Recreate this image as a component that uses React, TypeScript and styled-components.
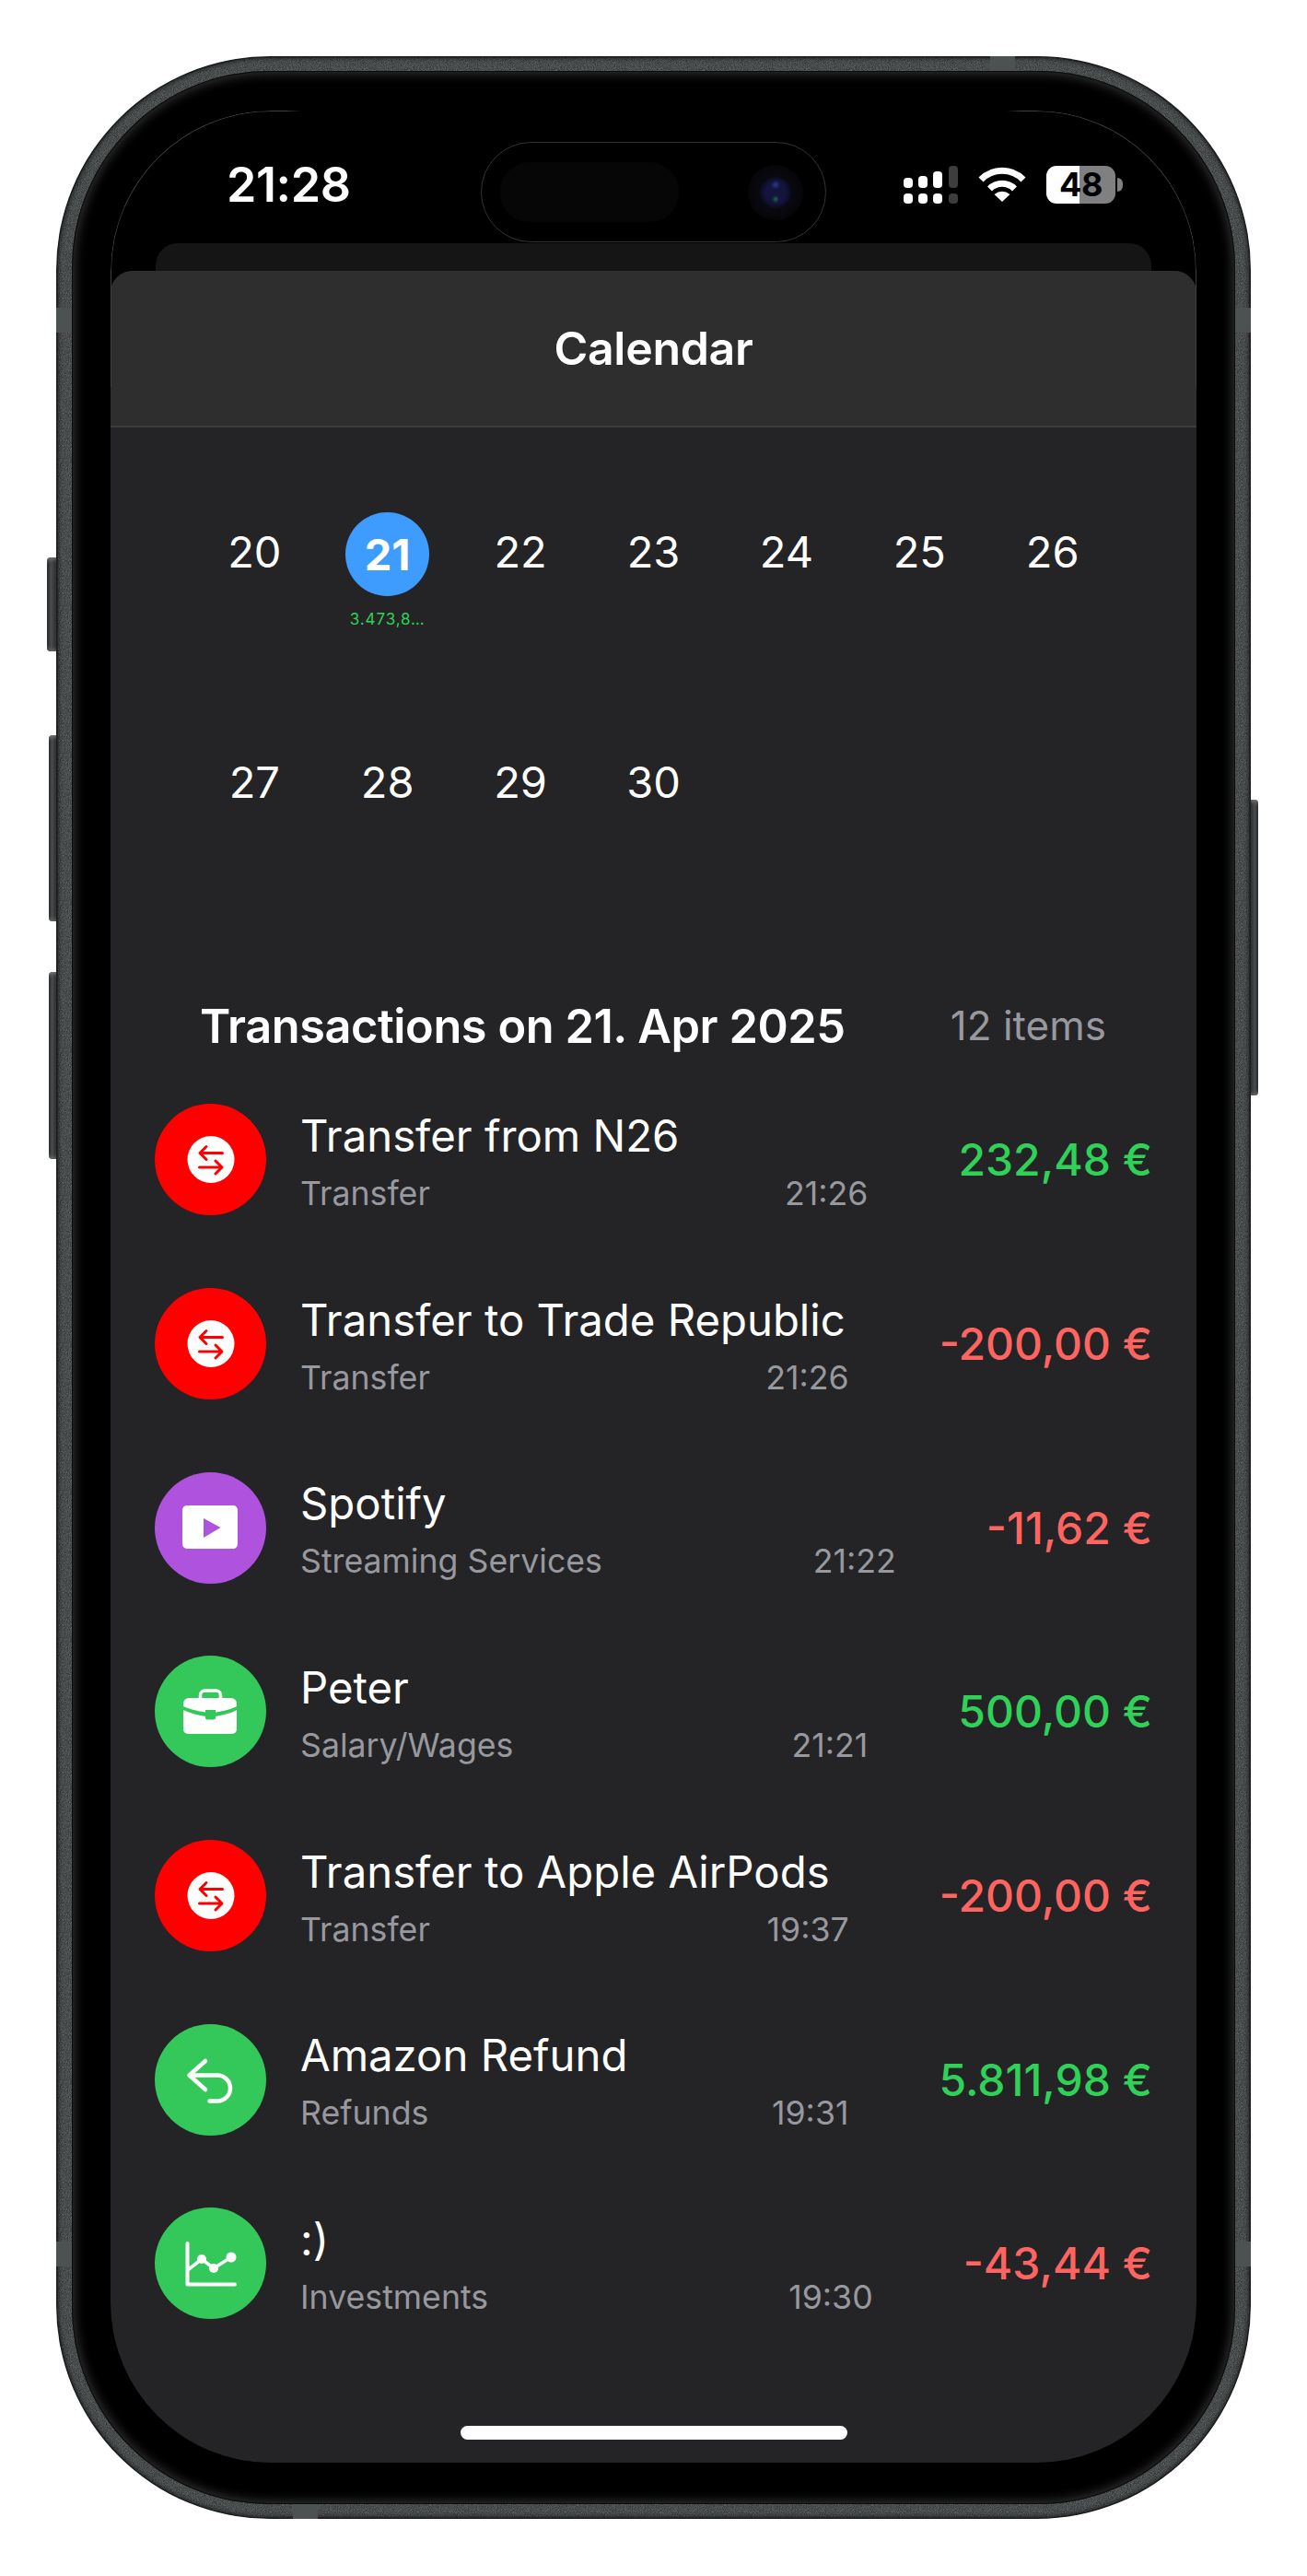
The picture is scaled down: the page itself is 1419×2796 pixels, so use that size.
import React from "react";
import styled, { createGlobalStyle } from "styled-components";

const NOISE = `url("data:image/svg+xml,%3Csvg xmlns='http://www.w3.org/2000/svg' width='160' height='160'%3E%3Cfilter id='n'%3E%3CfeTurbulence type='fractalNoise' baseFrequency='1.1' numOctaves='2' stitchTiles='stitch'/%3E%3CfeColorMatrix values='0 0 0 0 0.6 0 0 0 0 0.62 0 0 0 0 0.62 0 0 0 0.55 -0.12'/%3E%3C/filter%3E%3Crect width='160' height='160' filter='url(%23n)'/%3E%3C/svg%3E")`;

const Global = createGlobalStyle`
  html, body { margin: 0; padding: 0; background: #fff; }
  body { font-family: Inter, "Noto Sans", sans-serif; -webkit-font-smoothing: antialiased; }
`;

const Page = styled.div`
  width: 1419px;
  height: 2796px;
  padding-top: 61px;
  box-sizing: border-box;
  display: flex;
  justify-content: center;
  align-items: flex-start;
  background: #fff;
  overflow: hidden;
`;

const Device = styled.div`
  position: relative;
  width: 1297px;
  height: 2673px;
  box-sizing: border-box;
  padding: 16px 17px;
  border-radius: 232px;
  background: ${NOISE}, #313435;
  box-shadow: inset 0 0 0 1.5px #1b1d1d, inset 0 0 4px 3px rgba(15, 17, 17, 0.6);
`;

const SideKey = styled.div<{ $side: "left" | "right"; $top: number; $height: number; $width: number }>`
  position: absolute;
  top: ${(p) => p.$top}px;
  height: ${(p) => p.$height}px;
  width: ${(p) => p.$width}px;
  ${(p) => (p.$side === "left" ? `left: -${p.$width}px; border-radius: 4px 0 0 4px;` : `right: -${p.$width}px; border-radius: 0 4px 4px 0;`)}
  background: linear-gradient(${(p) => (p.$side === "left" ? "90deg" : "270deg")}, #232425 0, #4a4d4f 45%, #2a2c2d 100%);
  box-shadow: inset 0 5px 4px -3px #777, inset 0 -5px 4px -3px #666;
`;

const Band = styled.div<{ $pos: "h" | "v"; $a: string; $b: string }>`
  position: absolute;
  ${(p) => p.$a};
  ${(p) => p.$b};
  background: #4c5152;
  ${(p) => (p.$pos === "h" ? "width: 17px; height: 27px;" : "width: 27px; height: 16px;")}
`;

const Speaker = styled.div`
  position: absolute;
  top: 16px;
  left: 521px;
  width: 255px;
  height: 9px;
  background: #141515;
  border-radius: 0 0 6px 6px;
`;

const Bezel = styled.div`
  position: relative;
  height: 100%;
  box-sizing: border-box;
  padding: 43px 42px 45px 42px;
  border-radius: 214px;
  background: #000;
  box-shadow: inset 0 0 0 1px #0c0c0c, inset 0 0 12px 3px rgba(62, 64, 64, 0.8);
`;

const Screen = styled.div`
  position: relative;
  height: 100%;
  display: flex;
  flex-direction: column;
  border-radius: 174px;
  overflow: hidden;
  background: #000;
`;

const ScreenEdge = styled.div`
  position: absolute;
  top: 0;
  left: 0;
  right: 0;
  height: 300px;
  box-sizing: border-box;
  border: 1px solid #3f3f3f;
  border-bottom: 0;
  border-radius: 174px 174px 0 0;
  -webkit-mask-image: linear-gradient(90deg, #000 190px, transparent 206px, transparent calc(100% - 206px), #000 calc(100% - 190px));
  mask-image: linear-gradient(90deg, #000 190px, transparent 206px, transparent calc(100% - 206px), #000 calc(100% - 190px));
`;

const StatusBar = styled.div`
  flex: 0 0 144px;
  box-sizing: border-box;
  padding: 17px 88px 0 126px;
  display: flex;
  align-items: center;
  justify-content: space-between;
`;

const Clock = styled.div`
  color: #fff;
  font-size: 52px;
  font-weight: 600;
  letter-spacing: -0.4px;
  line-height: 60px;
`;

const StatusIcons = styled.div`
  display: flex;
  align-items: center;
  gap: 22px;
  margin-top: -1px;
`;

const Island = styled.div`
  position: absolute;
  top: 34px;
  left: 402px;
  width: 375px;
  height: 109px;
  box-sizing: border-box;
  border: 1px solid #333;
  border-radius: 55px;
  background: #000;
  display: flex;
  align-items: center;
  padding-left: 20px;
`;

const IslandPill = styled.div`
  width: 194px;
  height: 65px;
  border-radius: 32px;
  background: #060606;
`;

const Camera = styled.div`
  margin-left: 75px;
  width: 60px;
  height: 60px;
  border-radius: 50%;
  background:
    radial-gradient(circle at 50% 62%, #1a6a4a 0, transparent 4px),
    radial-gradient(circle at 50% 36%, #2a3a90 0, transparent 5px),
    radial-gradient(circle, #14143e 0 11px, #0e0e2a 15px, #08080f 18px, #060609 30px);
`;

const Battery = styled.div`
  position: relative;
  width: 75px;
  height: 41px;
  border-radius: 11px;
  background: linear-gradient(90deg, #fff 48%, #808080 48%);
  color: #000;
  font-size: 36px;
  font-weight: 700;
  line-height: 41px;
  text-align: center;
  letter-spacing: -0.5px;
  &::after {
    content: "";
    position: absolute;
    right: -8px;
    top: 13px;
    width: 6px;
    height: 15px;
    border-radius: 0 8px 8px 0;
    background: #808080;
  }
`;

const BehindCard = styled.div`
  flex: 0 0 30px;
  margin: 0 49px;
  border-radius: 24px 24px 0 0;
  background: #151515;
`;

const Sheet = styled.div`
  flex: 1;
  display: flex;
  flex-direction: column;
  border-radius: 24px 24px 0 0;
  background: #242426;
  overflow: hidden;
`;

const SheetHeader = styled.div`
  flex: 0 0 170px;
  box-sizing: border-box;
  display: flex;
  align-items: center;
  justify-content: center;
  background: #2e2e2f;
  border-bottom: 2px solid #3c3c3e;
  color: #fff;
  font-size: 50px;
  font-weight: 600;
  letter-spacing: -0.3px;
`;

const CalendarGrid = styled.div`
  display: grid;
  grid-template-columns: repeat(7, 144.4px);
  grid-auto-rows: 250px;
  justify-content: center;
  padding-top: 92px;
`;

const Day = styled.div`
  display: flex;
  flex-direction: column;
  align-items: center;
`;

const DayNumber = styled.div<{ $active?: boolean }>`
  width: 91px;
  height: 91px;
  display: flex;
  align-items: center;
  justify-content: center;
  border-radius: 50%;
  color: #fff;
  font-size: 47px;
  line-height: 87px;
  font-weight: ${(p) => (p.$active ? 700 : 400)};
  background: ${(p) => (p.$active ? "#3f9cff" : "transparent")};
  padding-bottom: ${(p) => (p.$active ? 0 : 7)}px;
  box-sizing: border-box;
`;

const DayAmount = styled.div`
  margin-top: 15px;
  color: #30d158;
  font-size: 17px;
  line-height: 20px;
  letter-spacing: 0.9px;
  white-space: nowrap;
`;

const TxHeading = styled.div`
  display: flex;
  align-items: center;
  justify-content: space-between;
  height: 60px;
  margin: 27px 0 16px;
  padding: 0 98px 0 97px;
`;

const TxTitle = styled.div`
  color: #fff;
  font-size: 50.5px;
  font-weight: 600;
  letter-spacing: -0.45px;
  white-space: nowrap;
`;

const TxCount = styled.div`
  color: #98989f;
  font-size: 44px;
  white-space: nowrap;
`;

const TxList = styled.div`
  display: flex;
  flex-direction: column;
`;

const TxRow = styled.div`
  height: 199.7px;
  display: flex;
  align-items: center;
  padding: 0 48px 0 48px;
`;

const TxIcon = styled.div<{ $color: string }>`
  flex: 0 0 121px;
  height: 121px;
  border-radius: 50%;
  background: ${(p) => p.$color};
  margin-right: 37px;
  svg { display: block; }
`;

const TxBody = styled.div`
  flex: 1;
  min-width: 0;
  padding-top: 10px;
  margin-right: 98px;
`;

const TxName = styled.div`
  color: #fff;
  font-size: 47.3px;
  line-height: 62px;
  white-space: nowrap;
`;

const TxMeta = styled.div`
  display: flex;
  justify-content: space-between;
  color: #98989f;
  font-size: 35.7px;
  line-height: 62px;
  white-space: nowrap;
`;

const TxAmount = styled.div<{ $positive: boolean }>`
  flex: none;
  color: ${(p) => (p.$positive ? "#30d158" : "#ff6560")};
  font-size: 48px;
  font-weight: 500;
  white-space: nowrap;
`;

const HomeBar = styled.div`
  position: absolute;
  left: 380px;
  bottom: 25px;
  width: 420px;
  height: 15px;
  border-radius: 8px;
  background: #fff;
`;

const Signal = () => (
  <svg width="59" height="41" viewBox="0 0 59 41" aria-hidden>
    <g fill="#fff">
      <rect x="0" y="13" width="10" height="11" rx="4" />
      <rect x="16" y="11" width="10" height="13" rx="4" />
      <rect x="32" y="6" width="10" height="18" rx="4" />
      <rect x="0" y="30" width="10" height="11" rx="4" />
      <rect x="16" y="30" width="10" height="11" rx="4" />
      <rect x="32" y="30" width="10" height="11" rx="4" />
    </g>
    <g fill="#3d3d3d">
      <rect x="49" y="0" width="10" height="24" rx="4" />
      <rect x="49" y="30" width="10" height="11" rx="4" />
    </g>
  </svg>
);

const Wifi = () => (
  <svg width="52" height="38" viewBox="0 0 52 38" aria-hidden>
    <g fill="none" stroke="#fff" strokeWidth="7">
      <path d="M3 14 A32 32 0 0 1 49 14" />
      <path d="M12.5 24 A19 19 0 0 1 39.5 24" />
    </g>
    <path d="M17.5 30 Q26 23.5 34.5 30 L26 38 Z" fill="#fff" />
  </svg>
);

const Transfer = () => (
  <svg width="121" height="121" viewBox="0 0 121 121" aria-hidden>
    <circle cx="61" cy="60.5" r="25.5" fill="#fff" />
    <g fill="none" stroke="#f00" strokeWidth="3" strokeLinecap="round" strokeLinejoin="round">
      <path d="M73.5 53.5 H49.5 M56 46.5 L49 53.5 L56 60.5" />
      <path d="M48.5 69 H72.5 M66 62 L73 69 L66 76" />
    </g>
  </svg>
);

const Play = () => (
  <svg width="121" height="121" viewBox="0 0 121 121" aria-hidden>
    <rect x="30" y="36" width="60" height="47" rx="5" fill="#fff" />
    <path d="M53 50 L71.5 60 L53 71 Z" fill="#af52de" />
  </svg>
);

const Briefcase = () => (
  <svg width="121" height="121" viewBox="0 0 121 121" aria-hidden>
    <rect x="49.5" y="38" width="22" height="13" rx="5" fill="none" stroke="#fff" strokeWidth="3.5" />
    <path fill="#fff" d="M31 52a6 6 0 0 1 6-6h46a6 6 0 0 1 6 6v3c-6 3-13 5-23 6.5v-2.5h-11v2.5c-10-1.5-18-3.5-24-6.5z" />
    <path fill="#fff" d="M31 59c7 3.5 15 5.5 24 7v1.5c0 1.2.8 2 2 2h7c1.2 0 2-.8 2-2V66c9-1.5 17-3.5 23-7v21a5 5 0 0 1-5 5H36a5 5 0 0 1-5-5z" />
  </svg>
);

const Refund = () => (
  <svg width="121" height="121" viewBox="0 0 121 121" aria-hidden>
    <path d="M55 40 L37.5 55.5 L55 71 M37.5 55.5 H68 A14 14 0 0 1 68 83.5 H59.5" fill="none" stroke="#fff" strokeWidth="4.5" strokeLinecap="round" strokeLinejoin="round" />
  </svg>
);

const Chart = () => (
  <svg width="121" height="121" viewBox="0 0 121 121" aria-hidden>
    <path d="M35.5 39 V83.5 H87" fill="none" stroke="#fff" strokeWidth="4" strokeLinecap="round" strokeLinejoin="round" />
    <path d="M37 67 L51 56 L64 66 L83 54" fill="none" stroke="#fff" strokeWidth="3.5" strokeLinecap="round" strokeLinejoin="round" />
    <circle cx="51" cy="56" r="5" fill="#fff" />
    <circle cx="64" cy="66" r="5" fill="#fff" />
    <circle cx="83" cy="54" r="5.5" fill="#fff" />
  </svg>
);

const RED = "#ff0000";
const PURPLE = "#af52de";
const GREEN = "#34c85a";

const rows = [
  { name: "Transfer from N26", cat: "Transfer", time: "21:26", amount: "232,48 €", pos: true, color: RED, Icon: Transfer },
  { name: "Transfer to Trade Republic", cat: "Transfer", time: "21:26", amount: "-200,00 €", pos: false, color: RED, Icon: Transfer },
  { name: "Spotify", cat: "Streaming Services", time: "21:22", amount: "-11,62 €", pos: false, color: PURPLE, Icon: Play },
  { name: "Peter", cat: "Salary/Wages", time: "21:21", amount: "500,00 €", pos: true, color: GREEN, Icon: Briefcase },
  { name: "Transfer to Apple AirPods", cat: "Transfer", time: "19:37", amount: "-200,00 €", pos: false, color: RED, Icon: Transfer },
  { name: "Amazon Refund", cat: "Refunds", time: "19:31", amount: "5.811,98 €", pos: true, color: GREEN, Icon: Refund },
  { name: ":)", cat: "Investments", time: "19:30", amount: "-43,44 €", pos: false, color: GREEN, Icon: Chart },
];

const days = [20, 21, 22, 23, 24, 25, 26, 27, 28, 29, 30];

export default function App() {
  return (
    <Page>
      <Global />
      <Device>
        <SideKey $side="left" $top={544} $height={102} $width={10} />
        <SideKey $side="left" $top={737} $height={202} $width={8} />
        <SideKey $side="left" $top={994} $height={203} $width={8} />
        <SideKey $side="right" $top={807} $height={321} $width={8} />
        <Band $pos="h" $a="left: 0" $b="top: 273px" />
        <Band $pos="h" $a="right: 0" $b="top: 273px" />
        <Band $pos="h" $a="left: 0" $b="top: 2372px" />
        <Band $pos="h" $a="right: 0" $b="top: 2372px" />
        <Band $pos="v" $a="top: 0" $b="left: 1014px" />
        <Band $pos="v" $a="bottom: 0" $b="left: 257px" />
        <Speaker />
        <Bezel>
          <Screen>
            <StatusBar>
              <Clock>21:28</Clock>
              <StatusIcons>
                <Signal />
                <Wifi />
                <Battery>48</Battery>
              </StatusIcons>
            </StatusBar>
            <BehindCard />
            <Sheet>
              <SheetHeader>Calendar</SheetHeader>
              <CalendarGrid>
                {days.map((d) => (
                  <Day key={d}>
                    <DayNumber $active={d === 21}>{d}</DayNumber>
                    {d === 21 && <DayAmount>3.473,8…</DayAmount>}
                  </Day>
                ))}
              </CalendarGrid>
              <TxHeading>
                <TxTitle>Transactions on 21. Apr 2025</TxTitle>
                <TxCount>12 items</TxCount>
              </TxHeading>
              <TxList>
                {rows.map((r, i) => (
                  <TxRow key={i}>
                    <TxIcon $color={r.color}>
                      <r.Icon />
                    </TxIcon>
                    <TxBody>
                      <TxName>{r.name}</TxName>
                      <TxMeta>
                        <span>{r.cat}</span>
                        <span>{r.time}</span>
                      </TxMeta>
                    </TxBody>
                    <TxAmount $positive={r.pos}>{r.amount}</TxAmount>
                  </TxRow>
                ))}
              </TxList>
            </Sheet>
            <HomeBar />
            <ScreenEdge />
            <Island>
              <IslandPill />
              <Camera />
            </Island>
          </Screen>
        </Bezel>
      </Device>
    </Page>
  );
}
